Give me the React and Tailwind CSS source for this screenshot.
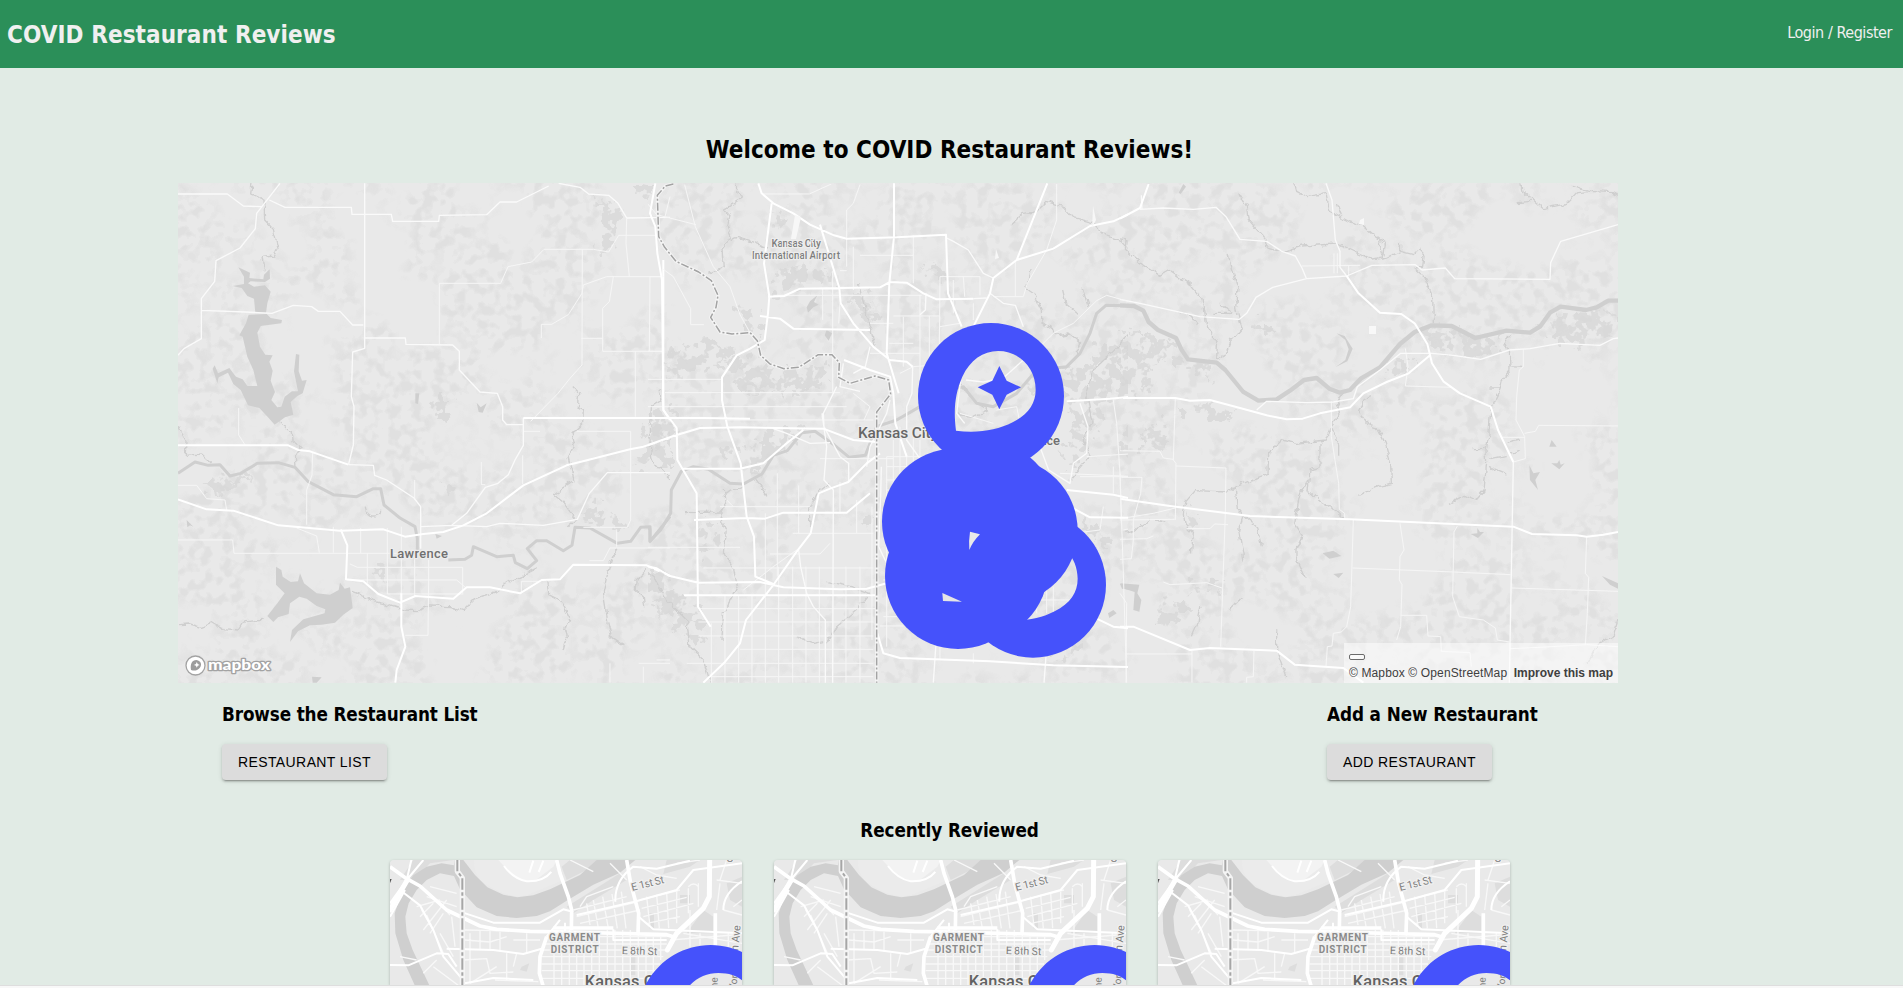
import React from "react";

const BLUE = "#4552fb";
const WATER = "#cfcfcf";

/* Path data below is kept at three units per pixel; each group scales it down. */
const west = {
  lakes: [
    "M205 262 L240 278 L238 294 L280 298 L282 284 L299 268 L300 296 L285 306 L242 304 L234 310 L252 320 L285 316 L302 335 L292 370 L288 398 L256 398 L252 356 L232 348 L215 324 L188 318 L222 312 L222 290 Z",
    "M236 404 L290 402 L302 414 L336 420 L334 430 L300 434 L272 438 L262 458 L270 500 L286 524 L308 526 L298 545 L308 572 L302 602 L315 636 L304 660 L322 682 L334 680 L344 650 L366 634 L384 634 L372 574 L378 522 L388 524 L386 574 L396 602 L410 600 L398 640 L382 648 L362 666 L370 704 L345 712 L314 734 L294 712 L268 684 L234 676 L212 630 L190 612 L174 578 L146 592 L142 610 L128 566 L134 556 L144 580 L178 564 L198 590 L218 598 L232 618 L262 618 L250 570 L232 530 L218 470 L208 466 L228 430 Z",
    "M318 1160 L334 1170 L338 1190 L362 1206 L384 1204 L390 1180 L402 1210 L440 1240 L480 1244 L506 1230 L510 1208 L524 1226 L540 1222 L548 1284 L520 1304 L495 1328 L455 1334 L420 1336 L384 1354 L360 1386 L366 1350 L400 1318 L464 1300 L466 1288 L440 1278 L410 1256 L388 1250 L360 1270 L356 1302 L324 1312 L310 1326 L292 1308 L322 1270 L344 1240 L318 1214 Z",
    "M736 640 L748 640 L744 672 L736 670 Z M920 668 L932 682 L950 670 L938 698 L926 696 Z M50 1020 L70 1040 L60 1036 L52 1042 Z M796 1062 L816 1068 L800 1076 Z M426 1490 L455 1492 L440 1508 L428 1508 Z",
  ],
  river:
    "M24 880 L75 846 L115 856 L150 854 L180 888 L212 880 L262 850 L325 848 L375 862 L415 905 L490 944 L560 950 L610 926 L632 926 L642 975 L690 1014 L735 1040 L742 1075 L742 1120 M835 1140 L885 1138 L905 1126 L910 1100 L980 1130 L1030 1126 L1036 1148 L1072 1166 L1100 1142 L1072 1106 L1100 1082 L1130 1082 L1180 1112 L1206 1096 L1215 1042 L1260 1044 L1342 1090 L1382 1084 L1412 1042 L1440 1040 L1440 1084 L1500 1010",
  streams: [
    "M246 10 L242 42 L282 60 L284 120 L310 148 L324 206 L312 228 L276 232 L282 268",
    "M330 722 L364 756 L366 780 L394 800 L376 830 L378 858",
    "M24 740 L48 782 L46 826 L95 822 L125 850",
    "M24 1334 L60 1332 L95 1342 L130 1328 L160 1346 L205 1350 L222 1322 L278 1318",
    "M546 1234 L580 1248 L610 1264 L660 1276 L700 1290 L745 1292 L780 1278 L840 1280 L880 1292 L912 1260 L970 1240 L1020 1204 L1100 1166",
    "M1206 620 L1226 640 L1222 680 L1240 690 L1238 730 L1206 758 L1216 800 L1194 830 L1204 870 L1212 900 L1152 942 L1180 964 L1220 1020 L1195 1040",
    "M1470 630 L1476 660 L1444 680 L1440 790 L1446 840 L1500 896",
    "M1130 1200 L1136 1244 L1172 1262 L1198 1310 L1184 1350 L1190 1380 L1182 1410",
    "M1345 1104 L1324 1140 L1310 1190 L1300 1240 L1314 1330 L1324 1370 L1360 1394",
    "M1430 1170 L1398 1200 L1396 1230 L1420 1250 L1424 1284",
    "M586 980 Q590 1010 612 1008 Q634 1008 632 992",
  ],
  major:
    "M24 796 L355 796 L385 810 L420 814 L535 854 M24 958 L110 988 L190 992 L325 1036 L510 1052 L640 1048 L705 1070 L760 1062 L820 1056 L880 1036 L950 1000 L1060 916 L1190 856 L1230 846 L1380 808 L1420 800 L1500 774 M1060 714 L1500 714 M512 1048 L532 1096 L528 1198 L580 1204 L625 1242 L690 1268 L736 1248 L850 1256 L890 1222 L960 1222 L1050 1240 L1115 1200 L1170 1198 L1210 1154 L1430 1156 L1500 1188 M694 1240 L694 1340 L706 1400 L680 1470 L676 1508 M1480 240 L1480 690 L1500 720",
  medium:
    "M24 526 L42 506 L94 476 L94 356 L134 304 L138 242 L210 204 L256 146 L260 100 L330 10 M584 10 L584 505 L548 516 L544 650 L552 680 L550 795 L536 852 M24 42 L172 42 L220 78 L275 80 M298 60 L345 82 L544 82 L546 103 L664 103 L668 124 L806 124 L808 106 L950 104 L990 66 L1040 66 L1136 18 M1166 10 L1230 22 L1256 42 L1316 46 L1344 70 L1370 114 L1500 112 M94 391 L225 396 L306 400 L370 376 L425 380 L445 394 L510 394 L548 435 L580 435 M584 474 L706 474 L708 493 L848 495 L868 514 L868 570 L930 636 L982 640 L998 680 L998 720 L1010 734 L1060 734 M1060 714 L1060 796 L1035 840 L1015 884 L984 910 L946 922 L890 1000 L845 1036 L752 1040 M535 854 L610 856 L614 886 L650 900 L732 954 L752 980 L752 1106 M845 1036 L950 1040 L990 1030 L1120 1036 L1222 1018 L1258 940 L1312 878 L1500 878",
  minor:
    "M808 493 L808 310 L992 310 L1014 260 L1085 246 L1122 208 L1270 208 L1316 216 L1346 166 L1455 166 M1114 474 L1114 433 L1145 433 L1195 404 L1236 340 L1240 315 L1310 290 L1480 290 M1237 208 L1236 555 L1200 595 L1164 640 L1082 724 M1330 290 L1318 365 L1298 385 L1298 514 L1478 514 M1234 475 L1298 475 M1440 290 L1438 514 M1396 514 L1396 710 M1378 290 L1368 190 L1370 116 M1062 754 L1110 754 M1220 754 L1382 754 L1382 1020 L1372 1042 L1240 1042 M24 916 L80 916 L110 956 L165 960 L170 990 M206 684 L206 765 L226 796 M428 816 L426 885 L410 930 L410 1034 M24 1080 L188 1080 L192 1120 L530 1120 L694 1120 M572 1044 V1120 M490 1040 V1118 M652 1044 V1242 M694 1040 V1240 M592 1120 V1210 M540 1152 L562 1162 H878 V1240 M530 1200 H860 L886 1222 M652 1242 H880 M734 900 V960 M734 1130 V1250 M776 1140 V1200 L774 1366 H706 M380 1044 L440 1068 L448 1118 M934 846 V914 H946 M1058 826 V912 M1054 1240 V1204 H1110 M1258 1142 H1300 L1320 1104 H1500 M1340 1048 V1100 M1320 1450 V1508 M1406 1450 H1500 M1420 1460 V1508",
  woods:
    "M110 900 L160 890 L215 882 L250 894 L180 920 L130 950 L108 930 Z M795 660 L830 640 L848 700 L820 714 L786 690 Z M810 910 L850 925 L862 950 L830 946 Z M1280 60 L1340 66 L1350 110 L1345 180 L1310 212 L1276 200 L1288 120 Z M1440 730 L1500 720 L1500 860 L1460 870 L1395 850 L1420 780 Z M1235 1000 L1280 950 L1310 1000 L1370 1010 L1370 1040 L1260 1030 Z M1385 12 H1440 V50 L1395 60 Z M605 1160 L650 1165 L640 1194 L605 1186 Z",
};

const centre = {
  woods:
    "M295 378 L355 392 L370 420 L370 460 L350 470 L318 430 Z M395 280 L440 250 L490 262 L570 280 L580 300 L480 325 L420 345 L386 320 Z M636 350 L700 340 L700 420 L660 400 L630 380 Z M80 520 L170 480 L240 490 L290 510 L240 560 L160 590 L90 590 Z M250 560 L320 520 L370 560 L480 570 L550 540 L570 600 L480 640 L300 630 Z M320 810 L420 740 L500 750 L430 810 L330 890 Z M860 250 L900 260 L920 300 L880 310 Z M1150 620 L1230 570 L1320 560 L1390 480 L1500 462 L1500 640 L1400 660 L1340 800 L1290 860 L1260 820 L1300 700 Z M10 700 L100 670 L110 760 L40 800 Z M190 1020 L230 1020 L240 1110 L180 1120 Z M1310 1010 L1390 1040 L1400 1130 L1350 1080 Z M1190 1330 L1280 1350 L1330 1410 L1220 1430 Z M1440 750 L1500 740 L1500 850 L1450 830 Z M0 1150 L80 1190 L200 1330 L170 1400 L60 1300 Z M635 1020 H690 V1040 H635 Z M240 800 L290 790 L300 820 L250 830 Z M395 100 L450 110 L430 150 L395 140 Z",
  stateLine:
    "M100 12 L76 18 L52 46 L56 170 L74 202 L108 244 L176 276 L214 302 L234 346 L228 382 L212 412 L240 456 L276 462 L330 458 L352 482 L362 526 L390 552 L432 566 L476 562 L535 524 L576 524 L598 548 L596 592 L630 610 L705 588 L746 600 L752 642 L710 696 L710 1508",
  river:
    "M0 1040 L30 1046 L30 1084 L62 1050 L92 1000 L94 930 L124 874 L160 860 L205 868 L270 910 L310 912 L366 882 L400 826 L442 812 L486 758 L525 754 L584 796 L628 832 L676 826 L710 740 L770 720 L840 680 L920 630 L970 620 L1010 670 L1060 680 L1130 640 L1190 570 L1280 560 L1320 520 L1350 460 L1370 400 L1398 376 L1500 378",
  streams: [
    "M284 10 L304 54 L282 70 L252 88 L270 108 L262 140 L274 168 L260 190 L246 208 L250 260 L208 280 M270 180 L294 172 L340 188 L384 204",
    "M1114 132 L1150 100 L1185 96 L1218 64 L1270 80 L1300 112 L1358 128 L1400 170 L1440 184 L1500 250",
    "M1170 264 L1160 326 L1182 342 L1204 390 L1206 430 L1260 466 L1290 462 L1322 488 L1300 540",
    "M1268 330 L1278 372 L1314 402 M1326 322 L1344 378",
    "M560 1390 L590 1340 L650 1290 L690 1240 L640 1222 L560 1204",
    "M250 930 L258 980 L240 1010 L256 1050 L250 1120 L280 1160 L292 1220 L250 1300 L246 1380",
    "M350 900 L384 946 M320 912 L250 940 M135 998 L250 996 M510 1040 L508 990 L530 940 L570 910",
    "M1500 462 L1466 462 L1420 514 L1360 570 L1340 640 L1356 730 L1330 780 L1350 830 L1290 900",
    "M0 1160 L40 1190 L80 1260 L140 1320 L150 1400 L190 1440 L210 1508",
    "M948 592 L1020 678 L1040 690 L1000 710 L960 705 M655 310 L684 420 L706 500",
    "M470 1370 L520 1390 L550 1384",
  ],
  major:
    "M355 10 L365 40 L400 70 L460 100 L510 134 L582 166 L620 176 L770 172 L918 164 L924 340 L965 440 M762 10 L762 170 L748 310 L740 520 L776 640 M395 70 L372 250 L388 350 L384 400 L374 480 L330 506 L290 526 L246 592 L246 660 L262 740 L302 850 L320 1010 L342 1070 L346 1190 L400 1212 M384 350 L432 348 L480 326 L720 322 L750 306 L800 308 L850 340 L890 358 L1000 356 M360 408 L420 416 L460 446 L690 450 M540 134 L598 324 L602 370 L640 430 L700 500 L750 540 L800 545 L818 560 M612 540 L690 570 L750 590 L760 640 L766 730 L800 830 M0 714 L190 714 L330 716 M0 804 L100 768 L180 744 L300 742 L410 744 L550 746 L640 780 L710 786 M125 866 L300 866 L370 850 L440 790 L490 750 M0 1154 L50 1165 L90 1188 L175 1208 L360 1206 L430 1222 L600 1228 L680 1226 L740 1210 M190 1508 L255 1446 L300 1390 L318 1320 L400 1215 L470 1115 L512 1060 L536 940 L570 926 L625 906 L680 850 L720 820 M162 1020 L320 1014 L375 1016 L430 998 L620 998 L690 940 M1222 10 L1130 240 L1060 294 L1050 340 L1000 440 M1130 240 L1240 206 L1350 138 L1420 124 L1500 86 M712 1360 L730 1420 L780 1434 L1050 1444 L1240 1456 L1500 1462 M132 1246 L710 1246 M1280 664 L1410 656 L1500 648 M1280 930 L1420 944 L1500 962 M1290 980 L1350 1012 L1500 1014 M1370 1316 L1420 1340 L1500 1348 M46 10 L30 100 L46 140 L52 220 L66 300 L70 690 L110 744 L112 840 L170 940 L174 1280 L212 1340",
  medium:
    "M546 700 L560 800 L552 900 L580 930 L578 1508 M1000 356 L1040 354 M1050 340 L1090 370 L1126 376 L1150 440 M590 620 L550 700 L552 740 L600 830 L626 850 L626 906 M818 560 L816 640 L800 680 L800 780 L850 850 M858 340 L856 390 L840 404 M690 500 L676 560 L640 580 M610 550 L600 620 L660 634 M724 860 L722 950 L716 1100 L740 1150 M476 1110 L482 1160 L500 1240 L520 1280 L556 1320 L556 1508 M1200 800 L1226 870 L1290 910 L1300 850 L1340 820 L1344 740 L1320 670 M890 1360 L880 1508 M1218 1430 L1212 1508 M750 660 L740 700 L690 800 L680 860 M400 746 L440 760 L510 790 L570 788 M978 600 L1030 606 L1090 594 L1150 540 M920 174 L940 184 L985 210 L1030 280 L1060 294 M962 600 L950 700 L974 730",
  minor:
    "M0 44 L50 104 L168 134 M90 50 L75 110 M134 14 L166 140 L220 260 L270 320 L300 404 L320 440 L346 486 M70 268 L100 290 L152 386 L152 434 L192 434 M30 290 H70 M0 514 H70 M0 598 L246 598 M75 638 H600 M0 680 H620 M260 720 H700 M400 346 L600 346 L845 346 M578 272 L578 640 M600 272 H620 M548 326 L548 420 M600 370 L596 430 M760 408 L900 408 M748 490 H820 M370 42 L508 42 L574 12 M620 260 L620 90 L640 70 L660 14 M640 200 V330 M660 226 H820 M820 166 V310 M840 345 V600 M790 410 V560 M868 408 V560 M900 290 H1020 V346 M900 290 L898 500 M970 290 L974 350 M940 300 V400 M690 430 L760 430 M690 520 H840 M1250 12 V120 L1220 210 L1162 310 L1150 350 H1060 M1126 240 V350 M1000 370 V420 M1180 520 L1240 460 L1300 430 L1370 362 L1400 346 L1500 374 M240 980 L510 980 M412 880 V1190 M540 836 L760 836 M476 916 V1060 M458 1060 L700 1060 M390 1122 L540 1122 L570 1090 M0 1102 L300 1102 M190 1164 L700 1164 M175 1286 H710 M175 1326 H700 M175 1368 H700 M300 1408 H700 M140 1450 H700 M213 1490 H700 M214 1330 V1508 M255 1246 V1508 M296 1246 V1508 M336 1246 V1508 M376 1000 V1508 M416 1160 V1508 M458 1160 V1508 M498 1160 V1508 M538 1160 V1508 M618 1160 V1508 M660 1160 V1508 M696 980 V1380 M600 906 V1000 M650 960 V1060 M640 640 L690 680 L672 720 M740 830 V1400 M760 780 V1160 M780 740 V900 M800 820 V920 M820 760 V900 M840 780 V860 M740 860 H850 M740 830 H900 M740 900 H800 M740 930 H780 M730 1200 H760 M730 1310 H830 M720 1338 H790 M1420 860 V940 M1440 880 L1450 1180 L1460 1508 M1320 890 H1500 M1340 830 L1500 820 M1260 880 L1500 890 M1200 870 V880 L1270 960 M1420 660 L1430 730 L1440 880 M1300 1060 L1380 1050 L1390 980 M1450 1050 L1500 1040 M960 700 L1060 730 M1070 690 L1130 680 L1140 730 M780 580 L820 560 L870 556 M900 440 L960 430 M0 878 H90 M260 960 L280 980 M310 1230 L400 1160 L470 1110 M900 1390 V1440 M1000 1420 V1450 M1190 1200 V1300 M1220 1200 V1300 M1240 1220 V1310 M1180 1260 H1290 M10 1430 V1508 M50 1440 H90",
  lakes: [
    "M532 346 L522 366 L536 374 L520 382 L504 398 L500 382 L510 364 Z M560 450 L576 460 L566 482 L554 466 Z M1440 1212 H1500 V1280 L1478 1230 L1446 1226 Z M1420 1290 L1430 1300 L1408 1314 L1404 1300 Z",
  ],
};

const east = {
  lakes: [
    "M190 12 L198 20 L182 42 L176 38 Z",
    "M650 460 L674 468 L698 506 L682 544 L646 562 L676 540 L686 508 L676 480 Z",
    "M0 1210 L58 1214 L52 1240 L64 1260 L58 1295 L40 1290 L44 1236 L18 1228 Z M1294 850 L1312 850 L1318 840 L1322 854 L1334 850 L1318 868 Z M1052 1062 L1072 1060 L1072 1044 L1080 1056 L1092 1056 L1074 1074 Z M608 1120 L640 1112 L664 1128 L628 1136 Z M640 1182 L670 1178 L656 1194 Z M1446 1188 L1494 1210 V1226 L1470 1214 Z M1228 856 L1240 880 L1260 876 L1246 900 L1254 930 L1230 900 Z M1295 780 L1310 800 L1288 800 Z",
  ],
  river:
    "M0 376 L42 378 L70 392 L86 426 L114 450 L168 474 L184 508 L204 538 L290 548 L316 570 L370 636 L415 662 L470 658 L510 632 L552 600 L590 594 L628 626 L660 638 L690 630 L722 596 L780 562 L840 492 L884 456 L935 436 L995 438 L1066 474 L1160 452 L1230 458 L1260 440 L1290 398 L1322 380 L1398 390 L1430 382 L1465 362 L1494 362",
  streams: [
    "M0 180 L18 182 L16 208 L70 256 L116 286 L144 270 L210 314 L246 356 L256 430 L292 490 L290 540 M324 220 L334 268 L354 324 L350 388 L366 444 L330 488 L314 528 L292 540 M366 444 L356 420",
    "M356 40 L384 86 L388 122 L434 176 L440 200 L490 214 L540 198 L650 192 L690 210 L756 240 L800 232 L838 216 L842 190 L842 214 L880 224 L895 208 L912 226 L908 262 L882 264 L912 290 L938 350 L940 430",
    "M524 10 L530 34 L560 50 L618 40 L630 94 L690 126 L728 136 L766 168 L796 190 L792 226 M652 74 L664 106 M776 180 L792 236",
    "M1202 10 L1206 30 L1270 86 L1340 70 L1370 38 L1410 34 L1480 38 L1494 46 M1190 68 L1236 64 M1356 16 L1410 34",
    "M175 396 L214 408 L232 434 M298 372 L320 388 L340 396 M286 400 L336 400",
    "M1176 460 L1152 490 L1168 504 L1170 570 L1146 600 L1138 638 L1112 690 L1106 770 L1098 810 L1100 850 L1092 930 L1066 960 L1030 946 L984 970 M1170 560 L1206 562 M1108 624 L1140 624 M1058 806 L1096 806",
    "M668 640 L652 670 L660 700 L632 740 L616 780 L530 790 L486 780 L446 820 L444 880 L406 896 L346 920 L320 936 L226 932 L198 964 L190 1000 L196 1036 L220 1060 L214 1120 M632 740 L656 790 L656 830 M600 790 L600 860 L570 870 L564 930 L600 964 L650 994 L672 1014",
    "M564 900 L540 940 L524 1030 L548 1066 L528 1110 L528 1130 L556 1190",
    "M346 920 L352 990 L368 1010 L356 1050 L372 1142 M370 1006 L410 1040 L424 1096",
    "M750 650 L730 660 L716 692 L740 730 L770 740 L796 790 L812 850 L814 910 L760 924 L718 946",
    "M16 1058 L40 1052 L90 1018 L136 1026 M240 1280 L230 1330 L214 1366 M470 1354 L470 1410 L500 1494 M1494 1320 L1480 1366 L1430 1396 L1404 1450 M330 1288 L370 1248",
    "M1200 780 L1160 790 M1170 820 L1204 808 M1114 836 L1160 826 M1106 862 L1162 886",
  ],
  major:
    "M0 654 L165 654 L210 662 L270 660 L360 684 L440 706 L500 718 L548 716 L600 700 L690 682 L730 640 L800 606 L866 580 L930 526 M680 288 L714 338 L780 398 L844 402 L884 430 L922 492 L936 550 L970 604 L1020 640 L1112 680 L1134 750 L1180 846 M0 956 L150 978 L390 1008 L690 1018 L1180 1040 L1236 1062 L1370 1066 L1400 1070 L1450 1064 L1494 1056 M0 1340 L40 1340 L210 1410 L270 1404 L470 1412 L524 1454 L670 1464 L730 1508 M0 116 L60 84 L86 12",
  medium:
    "M60 88 L130 84 L220 88 L288 82 L318 110 L360 178 L440 184 L486 214 L526 228 L546 264 L560 298 M618 10 L636 60 L646 180 L660 214 L660 262 L680 288 M0 358 L60 370 L240 410 L358 418 L380 400 L408 352 L458 322 L560 296 L680 288 L756 256 L886 254 L906 270 L976 264 L1004 296 L1290 298 L1292 248 L1322 184 L1494 134 M936 520 L1000 526 L1082 538 L1168 510 L1230 506 L1320 490 L1440 496 L1480 476 L1494 474 M1180 846 L1174 1180 L1168 1508 M410 690 L440 664 L560 668 L640 666 L700 656 L712 620 L780 570 L842 520 L936 520 M64 46 L66 90",
  minor:
    "M546 258 L720 256 M642 280 V220 M652 280 V220 M686 256 V290 M856 505 L864 560 L856 618 L996 622 M1210 508 L1210 560 L1198 570 L1190 650 L1188 720 L1214 770 L1216 836 L1180 846 M1144 772 H1214 M1214 760 L1246 754 L1256 736 L1494 738 M166 654 L160 840 L168 850 L166 1020 M0 812 L120 814 L130 834 L160 838 M168 858 L318 864 L316 1000 L302 1400 M634 664 L634 770 L648 860 L656 910 L658 988 L674 1000 V1016 M700 1020 L692 1280 L680 1340 L664 1356 L640 1360 L636 1398 L622 1400 L618 1460 M840 1030 L852 1110 L840 1130 L838 1200 L846 1214 L842 1340 L830 1380 M842 1306 L920 1306 L924 1368 L962 1370 L964 1414 L1050 1418 L1054 1460 M1012 1038 L1002 1056 L998 1250 L1018 1310 L1090 1320 L1126 1344 L1132 1380 L1168 1386 M698 1164 L1000 1176 L1172 1184 M1176 1224 L1494 1234 M1400 1072 L1396 1180 L1406 1192 L1402 1300 L1396 1394 M1170 1406 L1260 1402 L1400 1394 L1494 1400 M0 1078 L80 1076 L100 1068 M0 880 L4 1018 M4 892 H66 L62 940 L40 1020 L40 1080 L34 1136 L0 1138 M0 1016 L100 1000 L166 984 M0 1020 L164 1018 M200 1046 L270 1046 L284 1032 L324 1034 M130 1206 L150 1214 L260 1208 L306 1224 M0 1240 L20 1270 L18 1508 M16 1422 H216 M216 1412 V1508 M402 1412 L400 1490 L380 1492 V1508",
  woods:
    "M0 480 L30 464 L110 466 L170 490 L200 540 L280 560 L276 620 L250 580 L190 564 L140 540 L100 560 L80 640 L40 640 L0 600 Z M60 760 L120 714 L134 760 L156 790 L130 810 L60 806 Z M400 424 L426 414 L452 470 L424 460 Z M780 590 L820 540 L866 540 L872 570 L830 590 Z M900 450 L960 440 L1050 470 L1150 470 L1110 530 L980 520 L920 490 Z M1270 440 L1320 390 L1494 400 V480 L1400 488 L1290 486 Z M112 1266 L190 1262 L186 1330 L120 1344 Z M210 1206 L300 1210 L296 1236 L220 1250 Z M196 980 L240 1010 L240 1036 L196 1030 Z M170 674 L260 670 L350 690 L350 740 L330 700 L270 720 L220 690 L180 710 Z",
};

function Region({ data, dx, riverWidth = 9 }) {
  return (
    <g transform={`translate(${dx} -3) scale(0.33333)`} fill="none" strokeLinejoin="round">
      <path d={data.woods} fill="#d6d6d6" fillOpacity="0.7" filter="url(#thicket)" />
      <g stroke="#cfcfcf" strokeWidth="4" filter="url(#ragged)">
        {data.streams.map((d) => (
          <path key={d} d={d} />
        ))}
      </g>
      {data.lakes.map((d) => (
        <path key={d} d={d} fill={WATER} />
      ))}
      <path d={data.river} stroke={WATER} strokeWidth={riverWidth} />
      <path d={data.minor} stroke="#f6f6f6" strokeWidth="3" />
      <path d={data.medium} stroke="#fafafa" strokeWidth="4" />
      <path d={data.major} stroke="#ffffff" strokeWidth="6" />
      {data.stateLine && (
        <>
          <path d={data.stateLine} stroke="#f4f4f4" strokeWidth="10" />
          <path d={data.stateLine} stroke="#a3a3a3" strokeWidth="4.5" strokeDasharray="24 6 6 6" />
        </>
      )}
    </g>
  );
}

const DROP =
  "M948 752 C940 690 945 640 967 590 C990 540 1030 513 1074 513 C1140 513 1187 565 1187 629 C1187 670 1165 703 1118 727 C1070 752 1010 760 948 752 Z";
const STAR = "M1078 558 L1100 602 L1143 622 L1100 644 L1078 688 L1057 644 L1013 622 L1057 602 Z";

function Markers() {
  return (
    <g transform="translate(462 -3) scale(0.33333)">
      <mask id="pins" maskUnits="userSpaceOnUse" x="600" y="350" width="900" height="1150">
        <circle cx="1179" cy="1214" r="219" fill="white" />
        <path d={DROP} transform="translate(126 567)" fill="black" />
        <circle cx="1053" cy="648" r="219" fill="white" />
        <path d={DROP} fill="black" />
        <path d={STAR} fill="white" />
        <circle cx="945" cy="1025" r="219" fill="white" />
        <circle cx="1030" cy="1000" r="219" fill="white" />
        <circle cx="1094" cy="1052" r="219" fill="white" />
        <circle cx="1006" cy="1165" r="219" fill="white" />
        <circle cx="954" cy="1188" r="219" fill="white" />
        <path d="M990 1055 L1020 1063 Q998 1085 988 1110 Q986 1080 990 1055 Z M907 1239 L966 1265 L909 1263 Z" fill="black" />
      </mask>
      <rect x="600" y="350" width="900" height="1150" fill={BLUE} mask="url(#pins)" />
    </g>
  );
}

function RegionMap() {
  return (
    <svg className="block h-full w-full" viewBox="0 0 1440 500">
      <defs>
        <filter id="terrain" x="0" y="0" width="100%" height="100%" colorInterpolationFilters="sRGB">
          <feTurbulence type="fractalNoise" baseFrequency="0.09" numOctaves="2" seed="8" result="fine" />
          <feColorMatrix in="fine" values="0 0 0 0 0.82  0 0 0 0 0.82  0 0 0 0 0.82  4.5 0 0 0 -2" />
          <feComponentTransfer>
            <feFuncA type="discrete" tableValues="0 0.14 0.2 0.26 0.34" />
          </feComponentTransfer>
        </filter>
        <filter id="patches" x="0" y="0" width="100%" height="100%" colorInterpolationFilters="sRGB">
          <feTurbulence type="fractalNoise" baseFrequency="0.012" numOctaves="3" seed="21" />
          <feColorMatrix values="0 0 0 0 1  0 0 0 0 1  0 0 0 0 1  7 0 0 0 -2.8" />
        </filter>
        <filter id="ragged" filterUnits="userSpaceOnUse" x="-10" y="0" width="1540" height="1540">
          <feTurbulence type="fractalNoise" baseFrequency="0.045" numOctaves="2" seed="3" />
          <feDisplacementMap in="SourceGraphic" scale="20" xChannelSelector="R" yChannelSelector="G" />
        </filter>
        <filter id="thicket" filterUnits="userSpaceOnUse" x="-10" y="0" width="1540" height="1540">
          <feTurbulence type="fractalNoise" baseFrequency="0.03" numOctaves="3" seed="5" result="noise" />
          <feDisplacementMap in="SourceGraphic" in2="noise" scale="90" xChannelSelector="R" yChannelSelector="G" result="edge" />
          <feColorMatrix in="noise" values="0 0 0 0 0  0 0 0 0 0  0 0 0 0 0  0 0 18 0 -8" result="cut" />
          <feComposite in="edge" in2="cut" operator="in" />
        </filter>
        <mask id="patchMask" maskUnits="userSpaceOnUse" x="0" y="0" width="1440" height="500">
          <rect width="1440" height="500" filter="url(#patches)" />
        </mask>
      </defs>
      <rect width="1440" height="500" fill="#e9e9e9" />
      <g mask="url(#patchMask)">
        <rect width="1440" height="500" filter="url(#terrain)" />
      </g>
      <Region data={west} dx={-8} />
      <Region data={east} dx={942} riverWidth={13} />
      <svg x="470" y="0" width="480" height="500" viewBox="470 0 480 500">
        <Region data={centre} dx={462} />
      </svg>
      <path d="M617 32 l6 2 l-5 22 l-5 0 z M915 23 l3 14 l-4 8 z M818 66 l3 9 l-4 1 z" fill="#f7f7f7" />
      <path d="M1191 143h7v8h-7z M1182 37l4 -2 v7 l-5 -1z" fill="#f8f8f8" />
      <g
        fontFamily="Roboto, 'Liberation Sans', sans-serif"
        fontWeight="500"
        stroke="#ededed"
        strokeWidth="2.5"
        paintOrder="stroke"
        strokeLinejoin="round"
      >
        <g fontSize="10" fill="#7d7d7d">
          <text x="593.5" y="63.5" textLength="49.5">Kansas City</text>
          <text x="574" y="75.5" textLength="88">International Airport</text>
        </g>
        <text x="680" y="255" fontSize="15.5" textLength="80" fill="#666666">Kansas City</text>
        <text x="803" y="262" fontSize="13" textLength="79" fill="#707070">Independence</text>
        <text x="212" y="375" fontSize="13" textLength="58" fill="#707070">Lawrence</text>
      </g>
      <Markers />
      <g>
        <circle cx="17.5" cy="482.5" r="9.5" fill="#ffffff" stroke="#a3a3a3" strokeWidth="1.3" />
        <path d="M13 487 C12 481 14 477 18.5 477 C25 478 24 485 19 487 C17 488 15 487.6 13 487 Z" fill="#9c9c9c" />
        <path d="M18.8 479 l.9 2 l2 .9 l-2 .9 l-.9 2 l-.9 -2 l-2 -.9 l2 -.9 z" fill="#ffffff" />
        <text
          x="30"
          y="486.5"
          textLength="62"
          lengthAdjust="spacingAndGlyphs"
          fontFamily="Lato, sans-serif"
          fontWeight="900"
          fontSize="15.5"
          fill="#ffffff"
          stroke="#a3a3a3"
          strokeWidth="2.6"
          strokeLinejoin="round"
          paintOrder="stroke"
        >
          mapbox
        </text>
      </g>
    </svg>
  );
}

const streetGrid =
  "M580 330 L740 290 M590 350 L770 306 M600 370 L780 330 M640 300 L655 385 M668 290 L685 385 M696 282 L712 385 M724 275 L738 385 M620 310 L630 375 M780 300 L900 270 M785 325 L920 292 M790 350 L940 310 M800 370 L900 350 M800 290 L810 380 M830 284 L838 385 M860 278 L866 385 M890 270 V370 M925 265 V340 M955 250 V320 M925 260 Q942 244 955 260 M500 410 H860 M495 432 H860 M490 450 H860 M485 470 H850 M485 492 H840 M485 512 H830 M485 535 H810 M522 390 V555 M545 390 V555 M568 390 V555 M590 400 V555 M612 400 V555 M635 400 V555 M658 400 V555 M682 390 V555 M705 390 V555 M728 390 V555 M751 390 V555 M775 390 V555 M798 400 V540 M820 400 V520 M842 410 V480 M870 420 L1060 405 M910 400 L1086 430 M930 330 V440 M960 400 V434 M1045 400 V440 M255 390 L350 392 M255 420 L330 426 L380 410 M270 400 V550 M300 390 V450 M330 380 V450 M360 395 V455 M250 480 L320 476 L330 520 L400 516 M270 550 L350 500 M345 540 L475 545 M380 460 V540 M410 460 L400 500 M440 400 V456 M400 420 H480 M150 260 L230 280 M140 290 L230 320 M160 310 L120 350 M200 300 L130 390 M190 340 L150 400 M110 320 L180 300 M180 310 L210 345 M140 345 L190 460 M125 330 L165 400 M180 400 L220 470 M60 470 L110 480 M160 500 L240 560 M170 480 L130 520 M215 350 L225 440 M1010 240 L1086 250 M1020 250 L1010 330 M1040 180 L1020 240 M1060 320 L1086 300 M1030 330 L1086 345 M890 190 L960 180 M690 190 L740 240 M570 180 L640 215 M780 200 L830 225 L890 235 M600 320 L620 290 L700 260";

function CardMap() {
  return (
    <svg className="block h-full w-full" viewBox="0 0 352 125">
      <g transform="translate(-10 -60) scale(0.33333)" fill="none" strokeLinejoin="round">
        <rect x="30" y="180" width="1060" height="380" fill="#e9e9e9" />
        <path d="M100 180 H220 L150 190 L100 240 L60 240 Z M570 180 H680 L560 240 L545 200 Z M560 320 L640 270 L720 220 L740 240 L640 300 L580 340 Z M970 330 L1000 350 V400 H920 Z M1040 250 L1086 230 V320 L1050 300 Z M425 500 L448 490 L440 515 L420 510 Z M860 180 H960 L930 200 L850 222 Z M900 285 H930 V310 H900 Z M805 340 H822 V385 H808 Z M750 460 H766 V525 H750 Z" fill="#dddddd" />
        <path d="M282 180 H530 L550 240 L440 286 Q380 300 300 240 Q280 210 282 180 Z" fill="#ebebeb" />
        <path d="M355 180 H530 L520 200 L460 246 Q420 240 390 218 Z" fill="#f3f3f3" />
        <path d="M224 180 H250 L285 225 L322 262 L370 284 L412 292 L460 286 L510 268 L600 225 L650 180 H766 L720 218 L640 254 L560 302 L510 334 L470 348 L410 354 L350 348 L290 322 L240 268 L222 228 L180 220 L140 240 L110 270 L86 310 L76 350 L80 400 L98 450 L150 560 H106 L70 480 L46 400 L44 340 L64 280 L100 226 L140 200 L185 190 L222 196 Z" fill={WATER} />
        <path d="M372 198 Q400 236 440 244 Q490 246 514 216 M448 218 L460 182 M476 216 L490 182" stroke="#ffffff" strokeWidth="6" />
        <path d={streetGrid} stroke="#f8f8f8" strokeWidth="4" />
        <path d="M30 310 L80 240 L94 180 M130 180 L80 240 M60 270 L120 316 L160 390 L190 470 L245 535 M30 495 L85 496 L170 460 L205 462 L230 500 M240 335 L340 368 L480 368 L550 328 L580 336 M590 345 L760 306 L890 270 L915 240 L940 210 L1086 190 M706 305 Q704 240 760 200 L830 206 L930 182 M776 350 L820 388 L1086 400 M200 446 L340 450 L430 462 L485 446 M255 550 L340 534 L460 540 M30 350 L75 270 M1030 330 Q1030 280 1086 244 M500 410 L540 360 M700 388 V420 L860 420 M555 368 V400" stroke="#ffffff" strokeWidth="6" />
        <path d="M30 200 L80 236 L120 258 L200 330 L300 378 L350 388 L450 394 L560 396 L860 404 L880 410 M530 180 L540 220 L565 290 L575 330 L574 390 M740 180 L752 250 L776 340 L774 400 M500 410 L480 470 L478 520 L490 560 M520 384 H700 M1006 340 V440" stroke="#ffffff" strokeWidth="11" />
        <path d="M30 330 L82 240 M989 180 L988 290 L970 325 L890 400 L862 450" stroke="#ffffff" strokeWidth="15" strokeLinecap="round" />
        <path d="M232 180 V214 L247 234 V560" stroke="#f4f4f4" strokeWidth="16" />
        <path d="M232 180 V214 L247 234 V560" stroke="#a6a6a6" strokeWidth="6" strokeDasharray="34 8 10 8" />
        <path d="M30 237 L35 237 L30 250 Z" fill="#555555" />
        <g fontFamily="Roboto, 'Liberation Sans', sans-serif" fill="#8a8a8a" stroke="#f0f0f0" strokeWidth="8" paintOrder="stroke">
          <g fontWeight="700" fontSize="30">
            <text x="507" y="422" textLength="153">GARMENT</text>
            <text x="512" y="458" textLength="144">DISTRICT</text>
          </g>
          <g fontSize="32" fill="#7d7d7d">
            <text x="757" y="273" textLength="100" transform="rotate(-14 757 273)">E 1st St</text>
            <text x="725" y="462" textLength="107" transform="rotate(2 725 462)">E 8th St</text>
            <text x="1074" y="454" transform="rotate(-84 1074 454)">n Ave</text>
            <text x="1040" y="186">S</text>
          </g>
          <text x="614" y="561" fontSize="49" fontWeight="500" fill="#626262" textLength="264">Kansas City</text>
        </g>
        <path d="M992 435 a219 219 0 1 0 .1 0 Z M1015 519 c-70 0 -128 60 -130 160 h190 c60 -60 50 -160 -60 -160 Z" fill={BLUE} fillRule="evenodd" />
        <g fontFamily="Roboto, 'Liberation Sans', sans-serif" fill="#7d7d7d" fontSize="30">
          <text x="1012" y="572" transform="rotate(-88 1012 572)">ine</text>
          <text x="1066" y="572" transform="rotate(-80 1066 572)">Vor</text>
        </g>
      </g>
    </svg>
  );
}

function Heading({ as: Tag = "h3", size, children, className = "" }) {
  return (
    <Tag className={`font-['DejaVu_Sans_Condensed','DejaVu_Sans',sans-serif] font-bold whitespace-nowrap ${size} ${className}`}>
      {children}
    </Tag>
  );
}

function ActionButton({ children }) {
  return (
    <button className="flex h-9 w-[165px] items-center justify-center rounded-[4px] bg-[#dcdcdc] font-['Liberation_Sans',sans-serif] text-[14px] font-normal tracking-[0.4px] whitespace-nowrap text-black shadow-[0_3px_1px_-2px_rgba(0,0,0,0.2),0_2px_2px_0_rgba(0,0,0,0.14),0_1px_5px_0_rgba(0,0,0,0.12)]">
      {children}
    </button>
  );
}

export default function App() {
  return (
    <div className="flex h-[988px] w-[1903px] flex-col overflow-hidden bg-[#e1ebe5]">
      <header className="flex h-[68px] shrink-0 items-center justify-between bg-[#2b8f59] pr-[11px] pl-[7px]">
        <Heading as="h1" size="text-[24px] leading-[28px] tracking-[0.08px]" className="pt-[2px] text-[#f0f0f0]">
          COVID Restaurant Reviews
        </Heading>
        <a className="pb-[2px] font-['DejaVu_Sans_Condensed','DejaVu_Sans',sans-serif] text-[16px] tracking-[-0.45px] whitespace-nowrap text-[#f0f0f0]">
          Login / Register
        </a>
      </header>

      <main className="flex h-[917px] shrink-0 flex-col overflow-hidden text-black">
        <Heading as="h2" size="text-[24px] leading-[28px] tracking-[0.02px]" className="mt-[68px] w-[1899px] text-center">
          Welcome to COVID Restaurant Reviews!
        </Heading>

        <section className="relative mt-[19px] ml-[178px] h-[500px] w-[1440px] shrink-0 overflow-hidden">
          <RegionMap />
          <div className="absolute right-0 bottom-0 flex h-10 w-[274px] flex-col justify-end bg-white/50 px-[5px] font-['Liberation_Sans',sans-serif] text-[12px] leading-5 text-[#404040]">
            <span className="mb-[3px] h-[6px] w-4 rounded-[2px] border border-[#6b6b6b] bg-white/60" />
            <div className="flex justify-between whitespace-nowrap">
              <span className="tracking-[0.13px]">© Mapbox © OpenStreetMap</span>
              <span className="font-bold">Improve this map</span>
            </div>
          </div>
        </section>

        <section className="ml-[222px] flex w-[1270px] justify-between">
          <div className="flex w-[300px] flex-col pt-5">
            <Heading size="text-[18.72px] leading-[23px] tracking-[-0.12px]">Browse the Restaurant List</Heading>
            <div className="pt-[18px]">
              <ActionButton>RESTAURANT LIST</ActionButton>
            </div>
          </div>
          <div className="flex w-[165px] flex-col pt-5">
            <Heading size="text-[18.72px] leading-[23px] tracking-[-0.09px]">Add a New Restaurant</Heading>
            <div className="pt-[18px]">
              <ActionButton>ADD RESTAURANT</ActionButton>
            </div>
          </div>
        </section>

        <Heading size="text-[18.72px] leading-[23px] tracking-[-0.09px]" className="mt-[39px] w-[1899px] text-center">
          Recently Reviewed
        </Heading>
        <section className="mt-[18px] ml-[390px] flex gap-8">
          {[0, 1, 2].map((i) => (
            <article
              key={i}
              className="h-[125px] w-[352px] shrink-0 overflow-hidden rounded-t-[4px] shadow-[0_1px_3px_rgba(0,0,0,0.25)]"
            >
              <CardMap />
            </article>
          ))}
        </section>
      </main>
      <footer className="h-[3px] shrink-0 border-t border-[#dedede] bg-[#f8f8f8]" />
    </div>
  );
}
